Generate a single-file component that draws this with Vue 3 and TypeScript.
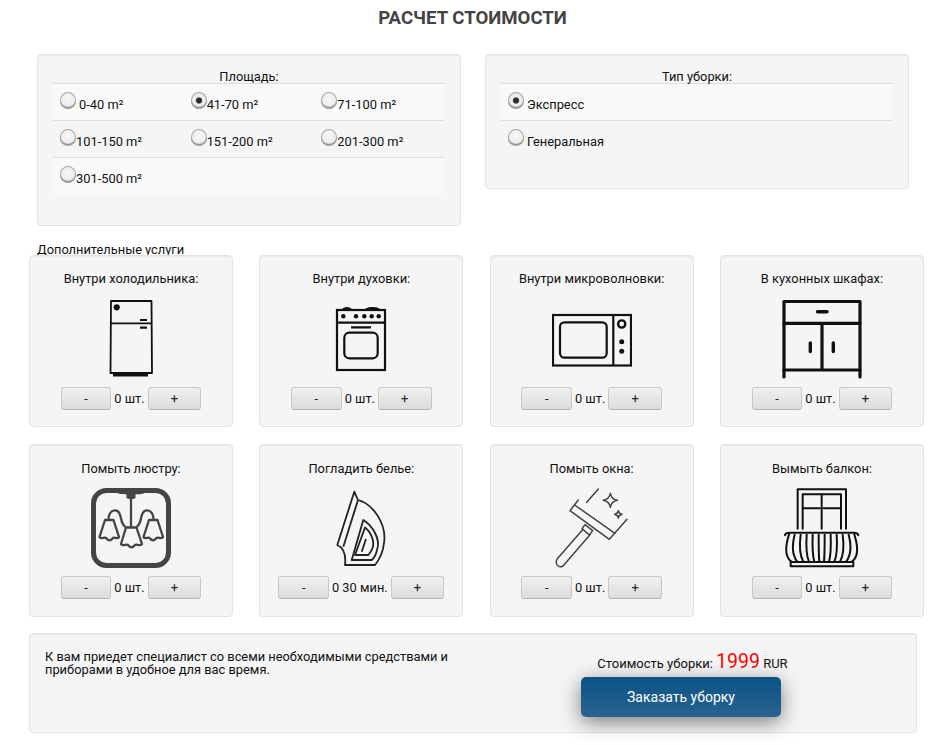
<script setup lang="ts">
import { ref } from 'vue'

const areas = ['0-40', '41-70', '71-100', '101-150', '151-200', '201-300', '301-500']
const area = ref('41-70')
const kind = ref('express')

const services = ref([
  { id: 'fridge', title: 'Внутри холодильника:', count: 0, unit: 'шт.' },
  { id: 'oven', title: 'Внутри духовки:', count: 0, unit: 'шт.' },
  { id: 'micro', title: 'Внутри микроволновки:', count: 0, unit: 'шт.' },
  { id: 'cabinet', title: 'В кухонных шкафах:', count: 0, unit: 'шт.' },
  { id: 'lamp', title: 'Помыть люстру:', count: 0, unit: 'шт.' },
  { id: 'iron', title: 'Погладить белье:', count: 0, unit: '30 мин.' },
  { id: 'window', title: 'Помыть окна:', count: 0, unit: 'шт.' },
  { id: 'balcony', title: 'Вымыть балкон:', count: 0, unit: 'шт.' },
])

const price = ref(1999)
</script>

<template>
  <div class="page">
    <h1 class="title">РАСЧЕТ СТОИМОСТИ</h1>

    <div class="top">
      <section class="well options">
        <div class="legend">Площадь:</div>
        <div class="rows">
          <div class="row-grid">
            <label v-for="(a, i) in areas" :key="a" class="cell" :class="{ first: i === 0 }">
              <input v-model="area" type="radio" name="area" :value="a" />
              <span>{{ a }} m²</span>
            </label>
          </div>
        </div>
      </section>

      <section class="well options">
        <div class="legend">Тип уборки:</div>
        <div class="rows single">
          <label class="cell first">
            <input v-model="kind" type="radio" name="kind" value="express" />
            <span>Экспресс</span>
          </label>
          <label class="cell first">
            <input v-model="kind" type="radio" name="kind" value="general" />
            <span>Генеральная</span>
          </label>
        </div>
      </section>
    </div>

    <div class="extra">Дополнительные услуги</div>

    <div class="cards">
      <div v-for="s in services" :key="s.id" class="well card">
        <div class="card-title">{{ s.title }}</div>

        <svg v-if="s.id === 'fridge'" class="icon" viewBox="0 0 80 80" fill="none" stroke="#111" stroke-width="1.800">
          <path d="M20 2H60.500L61 74H19.500Z" stroke-linejoin="round" />
          <path d="M19.500 24.300H60.500" />
          <path d="M49 21H56M49 28.700H56" stroke-width="2.200" />
          <path d="M22 76H57" stroke-width="3" />
          <circle cx="25.700" cy="8.300" r="3.100" fill="#111" stroke="none" />
        </svg>

        <svg v-else-if="s.id === 'oven'" class="icon" viewBox="0 0 80 80" fill="none" stroke="#111" stroke-width="2.200">
          <rect x="16" y="11" width="48" height="60" />
          <path d="M16 23.700H64M30 28.300H50" />
          <path d="M21 10.500C22 7 30 7 31 10.500ZM44 10.500C45 7 58 7 59 10.500Z" fill="#111" stroke="none" />
          <rect x="23.300" y="33.700" width="33.400" height="25.600" rx="5" />
          <g fill="#111" stroke="none">
            <circle cx="22.300" cy="17.300" r="2.200" />
            <circle cx="35" cy="17.300" r="2.200" />
            <circle cx="43.300" cy="17.300" r="2.200" />
            <circle cx="50.700" cy="17.300" r="2.200" />
            <circle cx="57.700" cy="17.300" r="2.200" />
          </g>
        </svg>

        <svg v-else-if="s.id === 'micro'" class="icon" viewBox="0 0 80 80" fill="none" stroke="#111" stroke-width="2.200">
          <rect x="1" y="16" width="78" height="50.500" />
          <path d="M61.300 16V66.500" />
          <rect x="8" y="23.300" width="46.700" height="35.400" rx="4.500" />
          <circle cx="69.700" cy="25" r="3.600" stroke-width="2.400" />
          <circle cx="69.700" cy="42.700" r="2.500" fill="#111" stroke="none" />
          <circle cx="69.700" cy="52.300" r="2.500" fill="#111" stroke="none" />
        </svg>

        <svg v-else-if="s.id === 'cabinet'" class="icon" viewBox="0 0 80 80" fill="none" stroke="#111" stroke-width="3.200" stroke-linecap="round" stroke-linejoin="round">
          <path d="M2 78V2.500H78V78" />
          <path d="M2 24.300H78M2 71H78M40 24.300V71" />
          <path d="M35.500 12.700H45M28.300 44V52.500M51.300 44V52.500" stroke-width="3.400" />
        </svg>

        <svg v-else-if="s.id === 'lamp'" class="icon" viewBox="0 0 80 80" fill="none" stroke="#444" stroke-width="2.300" stroke-linejoin="round">
          <rect x="2.500" y="2.500" width="75" height="75" rx="13" stroke-width="5" />
          <path d="M24 3H56C53 7 47 6 44.500 6.500V10C43 11.500 37 11.500 35.500 10V6.500C33 6 27 7 24 3Z" fill="#444" stroke="none" />
          <path d="M40 10V39" />
          <path d="M17.500 32C17.500 21 27.500 19 29.500 28C30.500 33 31 37 35 39.500" />
          <path d="M62.500 32C62.500 21 52.500 19 50.500 28C49.500 33 49 37 45 39.500" />
          <path d="M14 32H22.500L28 49C26 52 23.500 48 21.500 50.500C19.500 53 17.500 53 15.500 50.500C13.500 48 11 52 8.500 49Z" fill="#f5f5f5" />
          <path d="M58 32H66.500L72 49C69.500 52 67 48 65 50.500C63 53 61 53 59 50.500C57 48 54.500 52 52.500 49Z" fill="#f5f5f5" />
          <path d="M35 39.500H45.500L51 56C48.500 59 45.500 55 43.500 57.500C41.500 60 39.500 60 37.500 57.500C35.500 55 32.500 59 30 56Z" fill="#f5f5f5" />
        </svg>

        <svg v-else-if="s.id === 'iron'" class="icon" viewBox="0 0 80 80" fill="none" stroke="#222" stroke-width="1.800" stroke-linejoin="round">
          <path d="M33.300 3.700L37 12C52 16 66 36 63 55C62 65 58 72 54 77H24C25 68 23 60 16.300 57Z" />
          <path d="M37 12L22.300 58.700" />
          <path d="M42.300 32C52 38 60 52 56 62C55 67 53 70 50.700 72H30.700Z" />
          <path d="M44 39.500C50 44 54 54 51.500 60C50.500 63 49 65 47.300 67H34Z" />
          <path d="M45 51L40.700 63.700" />
        </svg>

        <svg v-else-if="s.id === 'window'" class="icon" viewBox="186 144 240 240" fill="none" stroke="#444" stroke-width="4.500" stroke-linejoin="round" stroke-linecap="round">
          <path d="M265 180L240 212L358 298L411 238" />
          <path d="M254 195L375 280" />
          <path d="M325 147L290 187" />
          <path d="M285 254L308 272L298 285L276 266Z" />
          <path d="M279 268L202 356C193 370 205 386 219 378L300 284" />
          <path d="M361 160C363 172 368 178 382 181C368 184 363 190 361 202C359 190 354 184 340 181C354 178 359 172 361 160Z" />
          <path d="M385 212C386 218 389 221 396 223C389 225 386 228 385 234C384 228 381 225 374 223C381 221 384 218 385 212Z" />
        </svg>

        <svg v-else-if="s.id === 'balcony'" class="icon" viewBox="876 144 240 240" fill="none" stroke="#111" stroke-width="6" stroke-linecap="round" stroke-linejoin="round">
          <path d="M923 266V148H1068V266" />
          <path d="M938 266V163H1053V266" />
          <path d="M995 163V266M940 205H989M1001 205H1051" />
          <path d="M885 286C885 278 892 278 900 278H1090C1098 278 1105 278 1105 286" />
          <path d="M897 284C887 315 884 350 904 365M1093 284C1103 315 1106 350 1086 365" />
          <path d="M914 284C906 315 906 345 922 365M1076 284C1084 315 1084 345 1068 365" />
          <path d="M932 284C928 315 928 345 940 365M1058 284C1062 315 1062 345 1050 365" />
          <path d="M950 284C948 315 948 345 957 365M1040 284C1042 315 1042 345 1033 365" />
          <path d="M968 284C967 315 967 345 973 365M1022 284C1023 315 1023 345 1017 365" />
          <path d="M986 284C986 315 986 345 988 365M1004 284C1004 315 1004 345 1002 365" />
          <path d="M902 366H1090V379H902Z" />
        </svg>

        <div class="stepper">
          <button class="btn minus" type="button" @click="s.count = Math.max(0, s.count - 1)">-</button>
          <span class="qty">{{ s.count }} {{ s.unit }}</span>
          <button class="btn plus" type="button" @click="s.count++">+</button>
        </div>
      </div>
    </div>

    <section class="well total">
      <p class="note">К вам приедет специалист со всеми необходимыми средствами и приборами в удобное для вас время.</p>
      <div class="summary">
        <div class="price">Стоимость уборки: <b>{{ price }}</b> RUR</div>
        <button class="order" type="button">Заказать уборку</button>
      </div>
    </section>
  </div>
</template>

<style>
html,
body {
  background: #fff;
}
</style>

<style scoped>
.page {
  width: 948px;
  height: 745px;
  overflow: hidden;
  box-sizing: border-box;
  padding-top: 8px;
  font-family: Roboto, "Noto Sans", sans-serif;
  font-size: 12.85px;
  color: #111;
}

.title {
  margin: 0 3px 26px 0;
  text-align: center;
  font-size: 18.6px;
  line-height: 20px;
  font-weight: 700;
  color: #444;
}

.well {
  box-sizing: border-box;
  background: #f5f5f5;
  border: 1px solid #e3e3e3;
  border-radius: 4px;
  box-shadow: inset 0 1px 1px rgba(0, 0, 0, 0.05);
}

.top {
  display: grid;
  grid-template-columns: 424px 424px;
  column-gap: 24px;
  align-items: start;
  padding-left: 37px;
}

.options {
  padding: 15px 15px 30px;
}

.legend {
  height: 13px;
  line-height: 13px;
  text-align: center;
}

.rows {
  border-top: 1px solid #ddd;
}

.row-grid {
  display: grid;
  grid-template-columns: repeat(3, 1fr);
  background: linear-gradient(#f9f9f9 0 37px, #f5f5f5 37px 74px, #f9f9f9 74px 110px, transparent 110px);
  background-repeat: no-repeat;
}

.cell {
  box-sizing: border-box;
  height: 37px;
  display: flex;
  align-items: flex-start;
  padding: 8px 7px 0;
  box-shadow: inset 0 -1px 0 #ddd;
}

/* only the first two rows carry a rule underneath */
.row-grid .cell:nth-child(n + 7) {
  box-shadow: none;
}

.single .cell:first-child {
  background: #f9f9f9;
}

.single .cell:last-child {
  box-shadow: none;
}

.cell span {
  padding-top: 5px;
  line-height: 15px;
}

.cell.first span {
  margin-left: 3px;
}

.cell input {
  appearance: none;
  flex: none;
  width: 16px;
  height: 17px;
  margin: 0;
  border-radius: 50%;
  background: radial-gradient(circle at 50% 40%, #f6f6f6 0, #eee 55%, #cfcfcf 100%);
  box-shadow: inset 0 0 0 1px #a8a8a8, inset 0 -2px 1px #8f8f8f;
}

.cell input:checked {
  background: radial-gradient(circle at 50% 50%, #222 0, #333 22%, #f2f2f2 32%, #e6e6e6 65%, #c8c8c8 100%);
}

.extra {
  height: 13px;
  margin-top: 16px;
  padding-left: 37px;
  line-height: 15px;
  overflow: hidden;
}

.cards {
  display: grid;
  grid-template-columns: repeat(4, 204px);
  column-gap: 26.33px;
  row-gap: 17px;
  padding-left: 29px;
}

.card {
  height: 172px;
  padding-top: 15px;
  display: flex;
  flex-direction: column;
  align-items: center;
}

/* second row sits a pixel taller, title lower */
.card:nth-child(n + 5) {
  height: 173px;
  padding-top: 16px;
}

.card:nth-child(n + 5) .icon {
  margin-top: 12px;
}

.card-title {
  line-height: 15px;
  text-align: center;
}

.icon {
  width: 80px;
  height: 80px;
  margin-top: 13px;
  flex: none;
}

.stepper {
  display: flex;
  align-items: center;
  gap: 3px;
  margin-top: 8px;
}

.qty {
  white-space: nowrap;
}

.btn {
  box-sizing: border-box;
  height: 23px;
  padding: 0;
  border: 1px solid #c8c8c8;
  border-bottom-color: #b4b4b4;
  border-radius: 3px;
  background: linear-gradient(#f0f0f0, #dcdcdc);
  font: inherit;
  color: #222;
}

.minus {
  width: 50.5px;
}

.plus {
  width: 53.5px;
}

.total {
  width: 888px;
  height: 100px;
  margin: 16px 0 0 29px;
  display: grid;
  grid-template-columns: 424px 1fr;
  padding: 16px 0 0 15px;
}

.note {
  margin: 0;
  line-height: 13px;
}

.summary {
  text-align: center;
}

.price {
  height: 27px;
  line-height: 24px;
  font-size: 13px;
}

.price b {
  font-size: 19.5px;
  font-weight: 400;
  color: #f00;
}

.order {
  display: block;
  width: 200px;
  height: 40px;
  margin-left: 112px;
  padding: 0;
  border: 0;
  border-radius: 5px;
  background: linear-gradient(#0a5285, #2a6490);
  box-shadow: 0 5px 20px rgba(0, 0, 0, 0.5);
  font: inherit;
  font-size: 14px;
  color: #fff;
}
</style>
